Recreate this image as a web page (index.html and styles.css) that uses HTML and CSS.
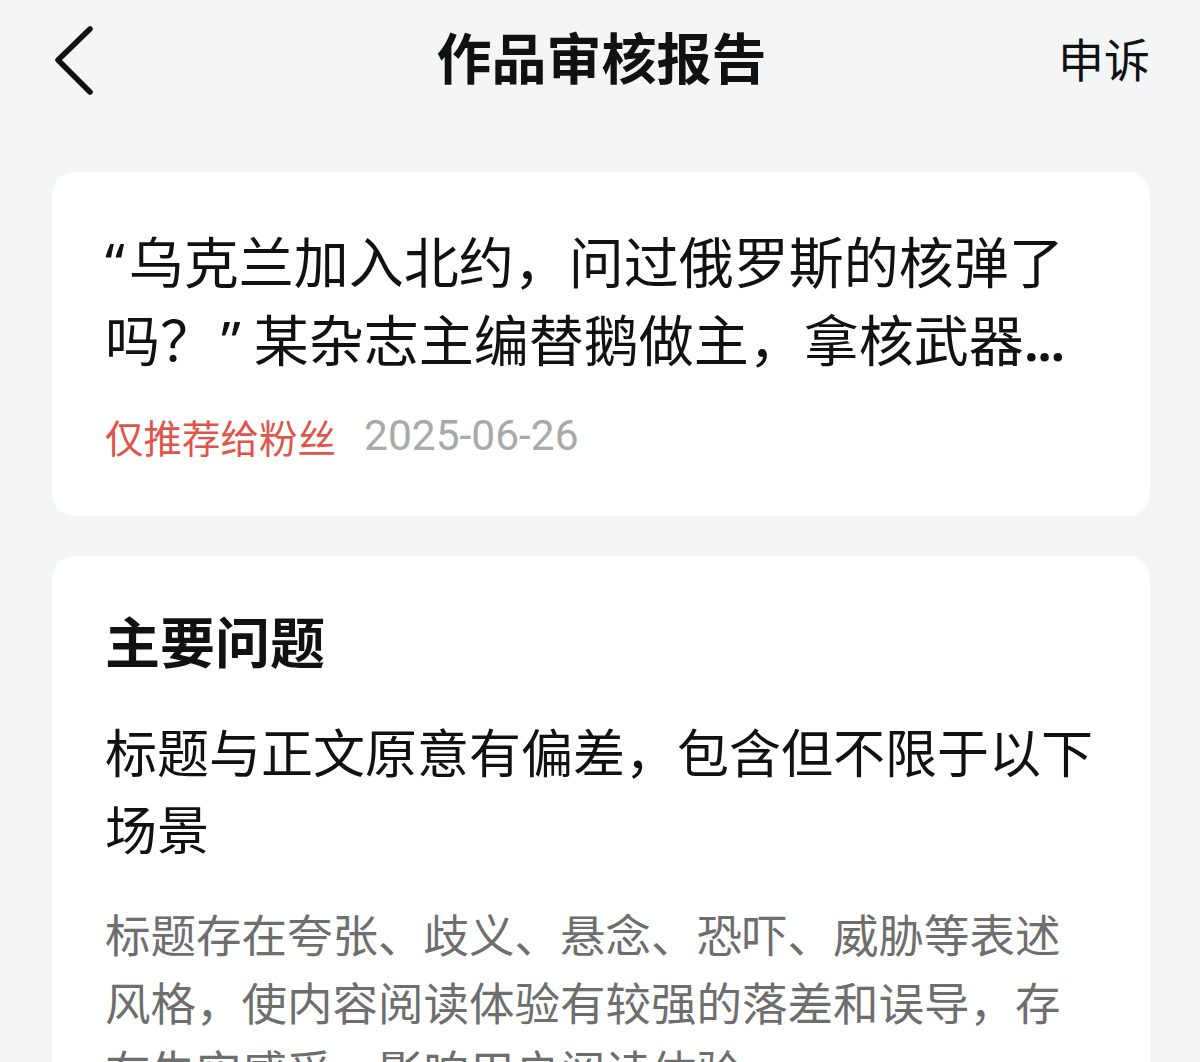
FILE: index.html
```html
<!DOCTYPE html>
<html lang="zh-CN">
<head>
<meta charset="utf-8">
<title>作品审核报告</title>
<link rel="stylesheet" href="styles.css">
</head>
<body>
<div class="page">
  <header class="topbar">
    <div class="back">
      <svg width="44" height="72" viewBox="0 0 44 72" aria-hidden="true">
        <polyline points="37,4 5,35 37,67" fill="none" stroke="#111" stroke-width="5.5" stroke-linecap="round" stroke-linejoin="round"/>
      </svg>
    </div>
    <h1 class="title">作品审核报告</h1>
    <div class="appeal">申诉</div>
  </header>

  <section class="card article">
    <p class="article-title"><span class="q">“</span>乌克兰加入北约，问过俄罗斯的核弹了吗？<span class="q q-close">”</span>某杂志主编替鹅做主，拿核武器<span class="dots">...</span></p>
    <div class="meta">
      <span class="tag">仅推荐给粉丝</span>
      <span class="date">2025-06-26</span>
    </div>
  </section>

  <section class="card issue">
    <h2 class="issue-head">主要问题</h2>
    <p class="issue-title">标题与正文原意有偏差，包含但不限于以下场景</p>
    <p class="issue-desc">标题存在夸张、歧义、悬念、恐吓、威胁等表述风格，使内容阅读体验有较强的落差和误导，存在失实感受，影响用户阅读体验。</p>
  </section>
</div>
</body>
</html>
```

FILE: styles.css
```css
html, body {
  margin: 0;
  padding: 0;
  background: #f4f5f7;
  height: 100%;
  overflow: hidden;
}

body {
  font-family: "Noto Sans CJK SC", "Noto Sans", sans-serif;
  color: #111;
}

.page {
  display: flex;
  flex-direction: column;
  padding: 0 50px 0 52px;
}

.topbar {
  display: flex;
  align-items: center;
  justify-content: space-between;
  height: 118px;
  margin-bottom: 54px;
}

.back {
  width: 120px;
  display: flex;
  align-items: center;
  padding-left: 1px;
  margin-top: 4px;
}

.back svg {
  display: block;
}

.title {
  margin: 0 0 8px;
  font-size: 55px;
  font-weight: 700;
  line-height: 1;
  letter-spacing: 0;
  color: #111;
}

.appeal {
  width: 120px;
  text-align: right;
  font-size: 46px;
  font-weight: 400;
  line-height: 1;
  margin-bottom: 4px;
}

.card {
  background: #fff;
  border-radius: 22px;
  padding: 0 53px;
}

.article {
  padding-top: 48px;
  padding-bottom: 55px;
  margin-bottom: 40px;
}

.article-title {
  margin: 0;
  font-size: 55px;
  line-height: 78px;
  height: 156px;
  color: #111;
}

.q {
  font-family: "Noto Sans", sans-serif;
  line-height: 1;
  margin-right: 4px;
}

.q-close {
  margin: 0 13px 0 6px;
}

.dots {
  font-family: "Noto Sans", sans-serif;
  font-weight: 600;
  line-height: 1;
  letter-spacing: -2px;
}

.meta {
  display: flex;
  align-items: center;
  gap: 28px;
  margin-top: 35px;
  height: 50px;
  font-size: 38.5px;
  line-height: 50px;
}

.tag {
  color: #e0544c;
}

.date {
  color: #a9a9a9;
  font-family: "Roboto", "Noto Sans", sans-serif;
  font-size: 42.5px;
}

.issue {
  padding-top: 48px;
}

.issue-head {
  margin: 0;
  font-size: 55px;
  font-weight: 700;
  line-height: 70px;
}

.issue-title {
  margin: 38px 0 0;
  font-size: 52px;
  line-height: 77px;
  color: #111;
}

.issue-desc {
  margin: 33px 0 0;
  font-size: 45.5px;
  line-height: 68px;
  color: #6e6e6e;
}
```
